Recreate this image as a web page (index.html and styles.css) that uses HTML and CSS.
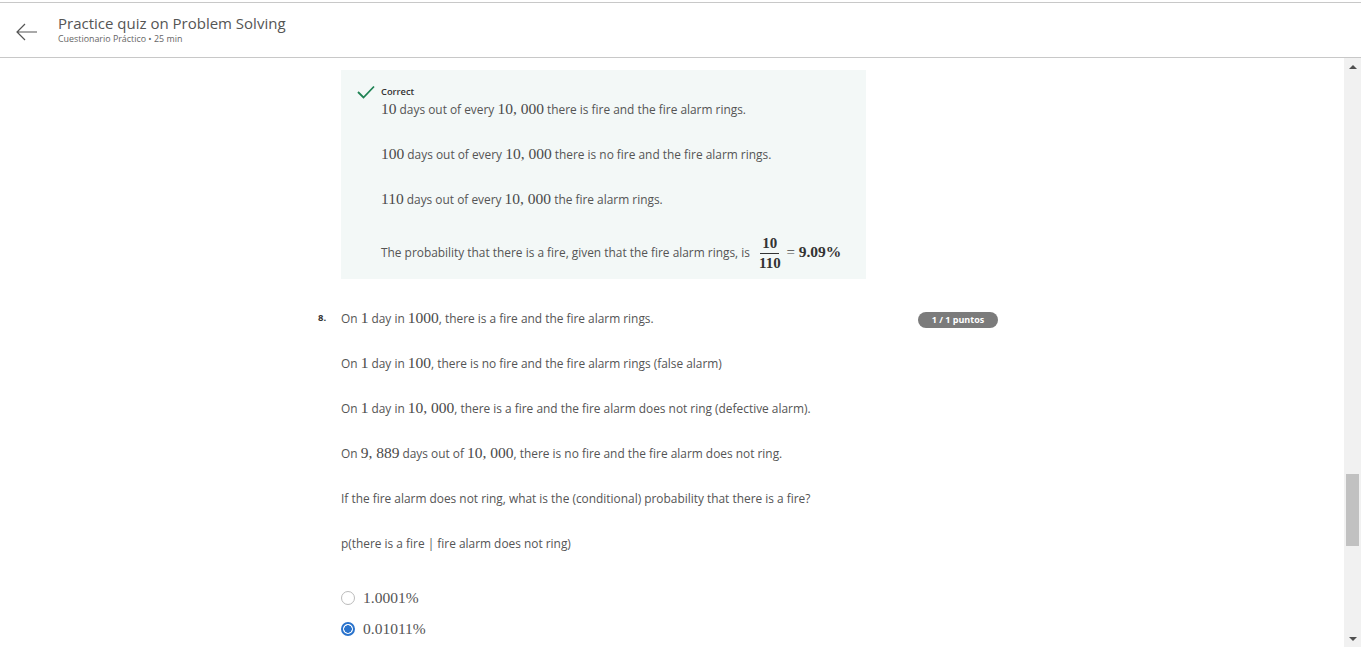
FILE: index.html
```html
<!DOCTYPE html>
<html lang="en">
<head>
<meta charset="utf-8">
<title>Practice quiz on Problem Solving</title>
<link rel="stylesheet" href="styles.css">
</head>
<body>
<div class="frame">
  <header class="topbar">
    <svg class="back" width="22" height="18" viewBox="0 0 22 18" aria-hidden="true">
      <path d="M1 9 H21 M9 1 L1 9 L9 17" fill="none" stroke="#555" stroke-width="1.2"/>
    </svg>
    <div class="titles">
      <div class="title">Practice quiz on Problem Solving</div>
      <div class="sub">Cuestionario Práctico • 25 min</div>
    </div>
  </header>
  <div class="main">
    <div class="content">
      <div class="q prev">
        <div class="num"></div>
        <div class="body">
          <div class="feedback">
            <div class="fb-head">
              <svg class="check" width="18" height="14" viewBox="0 0 18 14" aria-hidden="true">
                <path d="M1 7 L6.5 12.5 L17 1.5" fill="none" stroke="#1f8354" stroke-width="1.8"/>
              </svg>
              <span class="fb-label">Correct</span>
            </div>
            <div class="fb-text">
              <p><span class="m">10</span> days out of every <span class="m">10, 000</span> there is fire and the fire alarm rings.</p>
              <p><span class="m">100</span> days out of every <span class="m">10, 000</span> there is no fire and the fire alarm rings.</p>
              <p><span class="m">110</span> days out of every <span class="m">10, 000</span> the fire alarm rings.</p>
              <p class="last">The probability that there is a fire, given that the fire alarm rings, is <span class="frac"><span class="fn">10</span><span class="fd">110</span></span><span class="eq"> = </span><span class="mb">9.09%</span></p>
            </div>
          </div>
        </div>
        <div class="side"></div>
      </div>

      <div class="q">
        <div class="num">8.</div>
        <div class="body">
          <p>On <span class="m">1</span> day in <span class="m">1000</span>, there is a fire and the fire alarm rings.</p>
          <p>On <span class="m">1</span> day in <span class="m">100</span>, there is no fire and the fire alarm rings (false alarm)</p>
          <p>On <span class="m">1</span> day in <span class="m">10, 000</span>, there is a fire and the fire alarm does not ring (defective alarm).</p>
          <p>On <span class="m">9, 889</span> days out of <span class="m">10, 000</span>, there is no fire and the fire alarm does not ring.</p>
          <p>If the fire alarm does not ring, what is the (conditional) probability that there is a fire?</p>
          <p>p(there is a fire | fire alarm does not ring)</p>
          <div class="options">
            <label class="opt"><span class="radio"></span><span class="m opt-text">1.0001%</span></label>
            <label class="opt"><span class="radio on"></span><span class="m opt-text">0.01011%</span></label>
          </div>
        </div>
        <div class="side"><span class="badge">1 / 1 puntos</span></div>
      </div>
    </div>
    <div class="scrollbar">
      <div class="sb-arrow up"></div>
      <div class="sb-track"><div class="sb-thumb"></div></div>
      <div class="sb-arrow down"></div>
    </div>
  </div>
</div>
</body>
</html>
```

FILE: styles.css
```css
* { box-sizing: border-box; }
html, body { margin: 0; padding: 0; background: #fff; }
body {
  font-family: "Open Sans", "Liberation Sans", sans-serif;
  color: #555;
  overflow: hidden;
}
.frame {
  width: 1361px;
  height: 647px;
  padding-top: 2px;
  display: flex;
  flex-direction: column;
}
.topbar {
  height: 56px;
  border-top: 1px solid #c8c8c8;
  border-bottom: 1px solid #c8c8c8;
  display: flex;
  align-items: flex-start;
  flex-shrink: 0;
}
.back {
  margin: 20px 0 0 16px;
}
.titles {
  margin-left: 20px;
  padding-top: 10px;
}
.title {
  font-size: 15px;
  line-height: 20px;
  color: #555;
}
.sub {
  font-size: 8.9px;
  line-height: 12px;
  color: #666;
}
.main {
  flex: 1;
  display: flex;
  min-height: 0;
}
.content {
  flex: 1;
  overflow: hidden;
  padding: 12px 0 0 318px;
}
.q {
  width: 680px;
  display: grid;
  grid-template-columns: 23px 1fr auto;
}
.num {
  font-size: 9.5px;
  font-weight: 700;
  color: #333;
  line-height: 20px;
}
.body p {
  margin: 0 0 25px;
  font-size: 11.9px;
  line-height: 20px;
  height: 20px;
}
.m {
  font-family: "Liberation Serif", "DejaVu Serif", serif;
  font-size: 15.5px;
  line-height: 1;
  color: #4a4a4a;
}
.feedback {
  width: 525px;
  background: #f3f8f7;
  padding: 15px 16px 11px;
  margin-bottom: 29px;
}
.fb-head {
  display: flex;
  align-items: center;
  height: 14px;
}
.fb-label {
  margin-left: 6px;
  margin-top: -2px;
  font-size: 9.3px;
  font-weight: 600;
  color: #333;
}
.fb-text {
  padding-left: 24px;
}
.fb-text p { margin-bottom: 25px; }
.body .fb-text p.last {
  margin-bottom: 0;
  height: 34px;
  line-height: 34px;
}
.frac {
  display: inline-flex;
  flex-direction: column;
  align-items: center;
  vertical-align: middle;
  font-family: "Liberation Serif", "DejaVu Serif", serif;
  font-weight: 700;
  font-size: 15px;
  color: #333;
  line-height: 19px;
  margin-left: 4px;
}
.fn { padding: 0 2px; border-bottom: 1px solid #333; }
.fd { padding: 0 2px; }
.eq {
  font-family: "Liberation Serif", "DejaVu Serif", serif;
  font-size: 15px;
  color: #444;
  white-space: pre;
}
.mb {
  font-family: "Liberation Serif", "DejaVu Serif", serif;
  font-weight: 700;
  font-size: 15.5px;
  color: #333;
}
.side { padding-top: 4px; }
.badge {
  display: block;
  background: #7b7b7b;
  color: #fff;
  font-size: 9px;
  font-weight: 700;
  line-height: 16px;
  border-radius: 8px;
  width: 80px;
  text-align: center;
}
.options {
  margin-top: 34px;
  display: flex;
  flex-direction: column;
  gap: 10px;
}
.opt {
  display: flex;
  align-items: center;
  height: 21px;
}
.radio {
  width: 14px;
  height: 14px;
  border-radius: 50%;
  border: 1.5px solid #bbb;
  background: #fff;
  margin-right: 8px;
  flex-shrink: 0;
}
.radio.on {
  border: 2px solid #2a73cc;
  background: radial-gradient(circle, #2a73cc 0 3.5px, #fff 4px);
}
.opt-text { color: #555; }
.scrollbar {
  width: 17px;
  background: #f1f1f1;
  display: flex;
  flex-direction: column;
  flex-shrink: 0;
}
.sb-arrow {
  height: 17px;
  display: flex;
  align-items: center;
  justify-content: center;
}
.sb-arrow::before {
  content: "";
  width: 0;
  height: 0;
  border-left: 4px solid transparent;
  border-right: 4px solid transparent;
}
.sb-arrow.up::before { border-bottom: 4px solid #505050; }
.sb-arrow.down::before { border-top: 4px solid #505050; }
.sb-track {
  flex: 1;
  padding: 399px 2px 0;
}
.sb-thumb {
  height: 72px;
  background: #c1c1c1;
}
```
